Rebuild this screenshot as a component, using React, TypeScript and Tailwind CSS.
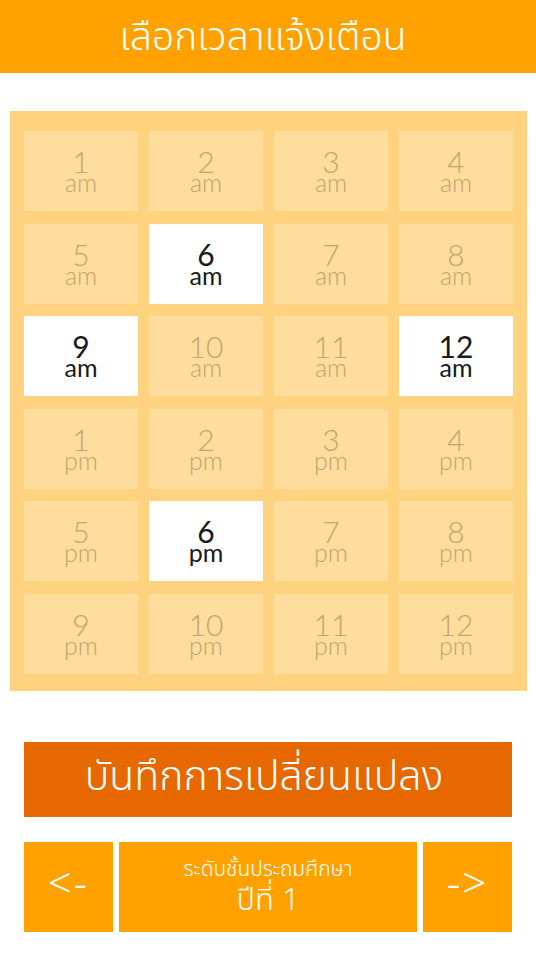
import React from "react";

const hours = [
  { n: "1", p: "am" }, { n: "2", p: "am" }, { n: "3", p: "am" }, { n: "4", p: "am" },
  { n: "5", p: "am" }, { n: "6", p: "am", on: true }, { n: "7", p: "am" }, { n: "8", p: "am" },
  { n: "9", p: "am", on: true }, { n: "10", p: "am" }, { n: "11", p: "am" }, { n: "12", p: "am", on: true },
  { n: "1", p: "pm" }, { n: "2", p: "pm" }, { n: "3", p: "pm" }, { n: "4", p: "pm" },
  { n: "5", p: "pm" }, { n: "6", p: "pm", on: true }, { n: "7", p: "pm" }, { n: "8", p: "pm" },
  { n: "9", p: "pm" }, { n: "10", p: "pm" }, { n: "11", p: "pm" }, { n: "12", p: "pm" },
];

const thai = "font-['Noto_Sans_Thai','Noto_Sans','DejaVu_Sans',sans-serif]";

export default function App() {
  return (
    <div className={`w-[536px] h-[958px] bg-white ${thai} overflow-hidden`}>
      <header className="h-[73px] bg-[#ffa200] flex items-center justify-center">
        <h1 className="text-white text-[39px] font-light leading-[50px] m-0 pt-[4px] pr-[10px]">เลือกเวลาแจ้งเตือน</h1>
      </header>

      <div className="mt-[38px] ml-[10px] w-[517px] bg-[#ffd27f] pt-[20px] pb-[17px] px-[14px]">
        <div className="grid grid-cols-4 gap-x-[11px] gap-y-[12.5px]">
          {hours.map((h, i) => (
            <div
              key={i}
              className={`h-[80px] flex items-center justify-center font-['Lato',sans-serif] ${
                h.on ? "bg-white text-[#1a1a1a] font-normal" : "bg-[#ffdd9c] text-[#c4a36f] font-light"
              }`}
            >
              <div className="whitespace-pre-line text-center text-[25px] leading-[21px] pt-[2px] first-line:text-[30px]">
                {`${h.n}\n${h.p}`}
              </div>
            </div>
          ))}
        </div>
      </div>

      <button className="mt-[51px] ml-[24px] w-[488px] h-[75px] bg-[#e86800] text-white text-[41px] font-light leading-none flex items-center justify-center pb-[4px] pr-[8px]">
        บันทึกการเปลี่ยนแปลง
      </button>

      <nav className="mt-[25px] ml-[24px] w-[488px] h-[90px] flex gap-x-[6px]">
        <button className="w-[89px] bg-[#ffa200] text-white text-[42px] font-light leading-none flex items-center justify-center pb-[4px] tracking-[2px]">
          &lt;-
        </button>
        <div className="w-[299px] bg-[#ffa200] text-white flex items-center justify-center pb-[6px]">
          <div className="whitespace-pre-line text-center text-[31px] font-light leading-[34px] first-line:text-[21px] first-line:leading-[28px]">
            {"ระดับชั้นประถมศึกษา\nปีที่ 1"}
          </div>
        </div>
        <button className="w-[89px] bg-[#ffa200] text-white text-[42px] font-light leading-none flex items-center justify-center pb-[4px] tracking-[2px]">
          -&gt;
        </button>
      </nav>
    </div>
  );
}
